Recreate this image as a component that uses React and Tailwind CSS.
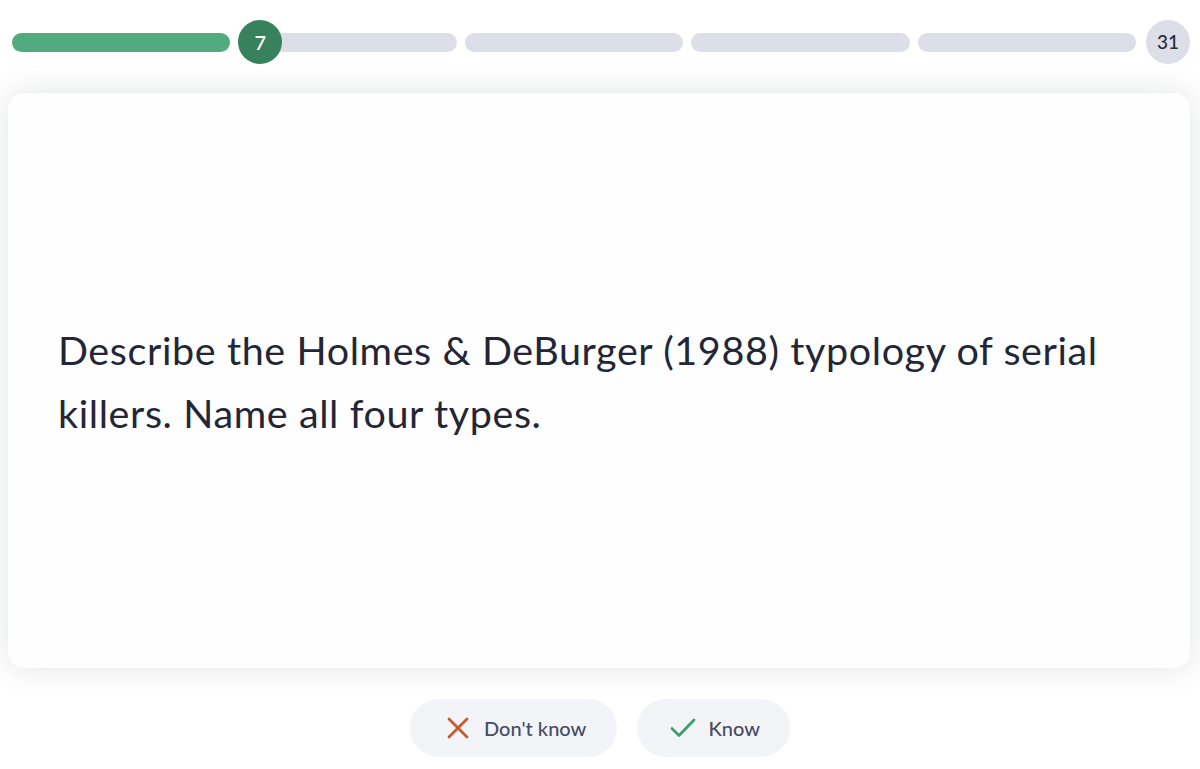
const SEGMENTS = [0, 1, 2, 3, 4];

function Progress({ done = 1, current = 7, total = 31 }) {
  return (
    <div className="flex h-[84px] items-center pl-3 pr-[10px]">
      <div className="flex flex-1 gap-2">
        {SEGMENTS.map((i) => (
          <div key={i} className="relative h-[19px] flex-1">
            <div
              className={`h-full rounded-full ${
                i < done ? "bg-[#52ab7c]" : "bg-[#dcdee8]"
              }`}
            />
            {i === done && (
              <div className="absolute left-0 top-1/2 flex h-11 w-11 -translate-y-1/2 items-center justify-center rounded-full bg-[#37815d] text-[20px] font-semibold text-white">
                {current}
              </div>
            )}
          </div>
        ))}
      </div>
      <div className="ml-[10px] flex h-11 w-11 items-center justify-center rounded-full bg-[#dcdee8] text-[19px] font-medium text-[#2a2d3a]">
        {total}
      </div>
    </div>
  );
}

function CrossIcon() {
  return (
    <svg width="22" height="22" viewBox="0 0 22 22" fill="none" stroke="#c85a2c" strokeWidth="2.8" strokeLinecap="round">
      <path d="M2 2 L20 20 M20 2 L2 20" />
    </svg>
  );
}

function CheckIcon() {
  return (
    <svg width="26" height="20" viewBox="0 0 26 20" fill="none" stroke="#3f9e6e" strokeWidth="2.8" strokeLinecap="round" strokeLinejoin="round">
      <path d="M2 10.5 L9 17.5 L24 2" />
    </svg>
  );
}

export default function App() {
  return (
    <div
      className="flex h-[769px] w-full flex-col bg-white"
      style={{ fontFamily: "Lato, 'Noto Sans', sans-serif" }}
    >
      <Progress />
      <div className="mx-2 mt-[9px] flex h-[575px] w-[1182px] items-center rounded-2xl bg-[#fefefe] px-[50px] shadow-[0_0_32px_rgba(20,24,40,0.12)]">
        <p className="text-[39.5px] leading-[63px] tracking-[0.6px] text-[#232637]">
          Describe the Holmes &amp; DeBurger (1988) typology of serial killers. Name all four types.
        </p>
      </div>
      <div className="mt-[31px] flex justify-center gap-5">
        <button className="flex h-[58px] items-center gap-[15px] rounded-full bg-[#f3f4f8] pl-[37px] pr-[31px] text-[20px] font-medium text-[#474c63]">
          <CrossIcon />
          Don&apos;t know
        </button>
        <button className="flex h-[58px] items-center gap-[12px] rounded-full bg-[#f3f4f8] pl-[33px] pr-[30px] text-[20px] font-medium text-[#474c63]">
          <CheckIcon />
          Know
        </button>
      </div>
    </div>
  );
}
